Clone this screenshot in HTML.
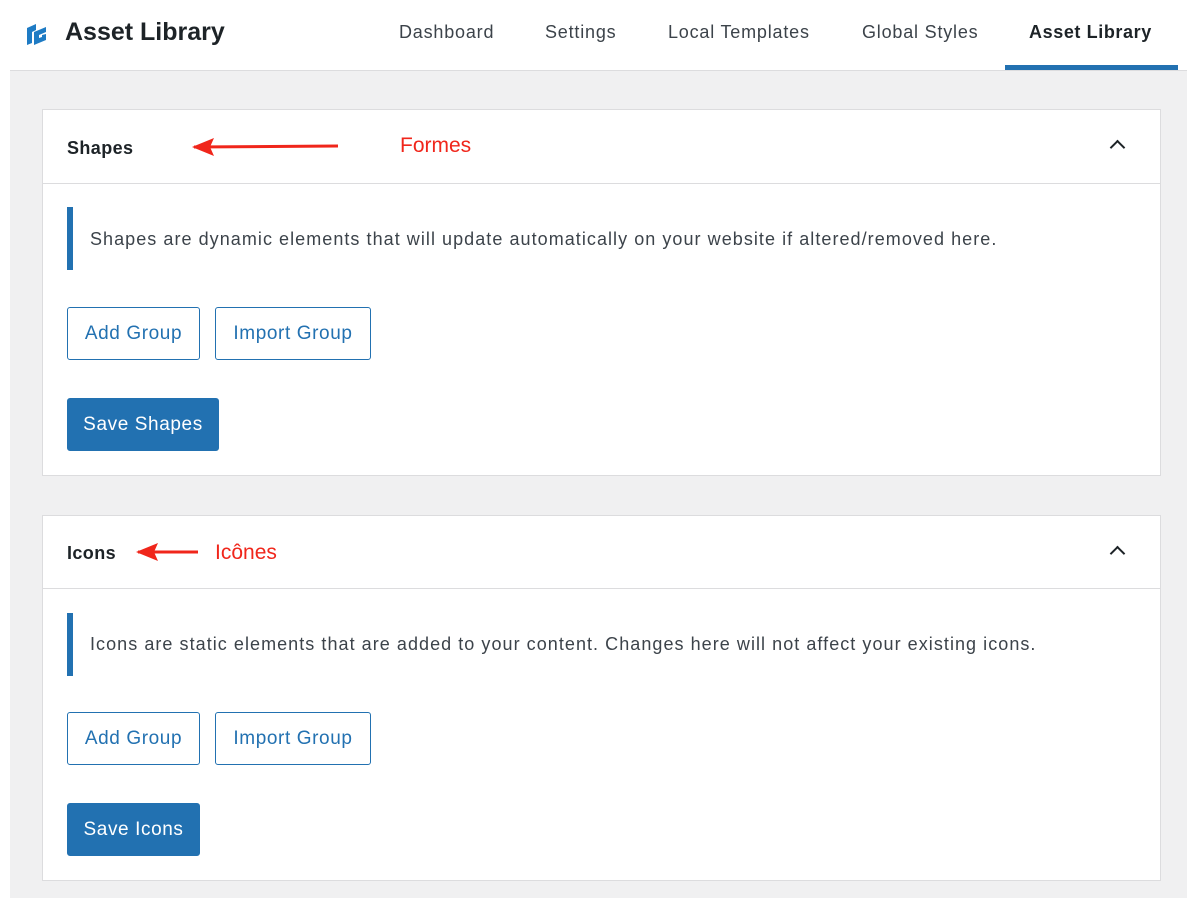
<!DOCTYPE html>
<html><head><meta charset="utf-8"><style>
*{box-sizing:border-box;margin:0;padding:0}
body{width:1200px;height:909px;background:#fff;font-family:"Liberation Sans",sans-serif;position:relative;overflow:hidden;color:#1d2327}
.abs{position:absolute}
.gray{left:10px;top:70px;width:1177px;height:828px;background:#f0f0f1;border-top:1px solid #dcdcde}
.tab{position:absolute;top:22px;font-size:18px;color:#3c434a;letter-spacing:0.8px}
.panel{position:absolute;left:42px;width:1119px;background:#fff;border:1px solid #dcdcde}
.ph{height:74px;border-bottom:1px solid #dcdcde;position:relative}
.ph h3{position:absolute;left:24px;top:28px;font-size:18px;font-weight:bold;color:#1d2327;letter-spacing:0.4px}
.chev{position:absolute;right:37px;top:32px;width:11px;height:11px;border-left:2.5px solid #1d2327;border-top:2.5px solid #1d2327;transform:rotate(45deg)}
.bar{position:absolute;left:24px;width:6px;height:63px;background:#2271b1}
.note{position:absolute;left:47px;font-size:18px;color:#3c434a;letter-spacing:1.05px}
.btn{position:absolute;height:53px;border:1.5px solid #2271b1;border-radius:3px;color:#2271b1;font-size:19px;display:flex;align-items:center;justify-content:center;background:#fff;letter-spacing:0.6px}
.save{background:#2271b1;color:#fff;border-color:#2271b1}
.red{position:absolute;color:#f0261b;font-size:21px}
</style></head><body>
<svg class="abs" style="left:26px;top:22px" width="22" height="24" viewBox="0 0 22 24"><path d="M1 6 L10 2 V8 L6 10 V21 L1 23Z M8 10 L20 5 V10 L13 13 V16 L16 15 V13 L20 12 V18 L8 23Z" fill="#1e7bc4"/></svg>
<div class="abs" style="left:65px;top:18px;font-size:25px;font-weight:bold;color:#1d2327">Asset Library</div>
<div class="tab" style="left:399px">Dashboard</div>
<div class="tab" style="left:545px">Settings</div>
<div class="tab" style="left:668px">Local Templates</div>
<div class="tab" style="left:862px">Global Styles</div>
<div class="tab" style="left:1029px;font-weight:bold;color:#1d2327;letter-spacing:0.6px">Asset Library</div>
<div class="abs gray"></div>
<div class="abs" style="left:1005px;top:65px;width:173px;height:5px;background:#2271b1"></div>

<div class="panel" style="top:109px;height:367px">
<div class="ph"><h3>Shapes</h3><div class="chev"></div></div>
<div class="bar" style="top:97px"></div>
<div class="note" style="top:119px">Shapes are dynamic elements that will update automatically on your website if altered/removed here.</div>
<div class="btn" style="left:24px;top:197px;width:133px">Add Group</div>
<div class="btn" style="left:172px;top:197px;width:156px">Import Group</div>
<div class="btn save" style="left:24px;top:288px;width:152px">Save Shapes</div>
</div>
<svg class="abs" style="left:190px;top:136px" width="150" height="22"><path d="M4 11 L148 10" stroke="#f0261b" stroke-width="3"/><path d="M2 11 L24 2 L20 11 L24 20Z" fill="#f0261b"/></svg>
<div class="red" style="left:400px;top:134px">Formes</div>

<div class="panel" style="top:515px;height:366px">
<div class="ph" style="height:73px"><h3 style="top:27px">Icons</h3><div class="chev"></div></div>
<div class="bar" style="top:97px"></div>
<div class="note" style="top:118px">Icons are static elements that are added to your content. Changes here will not affect your existing icons.</div>
<div class="btn" style="left:24px;top:196px;width:133px">Add Group</div>
<div class="btn" style="left:172px;top:196px;width:156px">Import Group</div>
<div class="btn save" style="left:24px;top:287px;width:133px">Save Icons</div>
</div>
<svg class="abs" style="left:134px;top:541px" width="66" height="22"><path d="M4 11 L64 11" stroke="#f0261b" stroke-width="3"/><path d="M2 11 L24 2 L20 11 L24 20Z" fill="#f0261b"/></svg>
<div class="red" style="left:215px;top:541px">Icônes</div>
</body></html>
